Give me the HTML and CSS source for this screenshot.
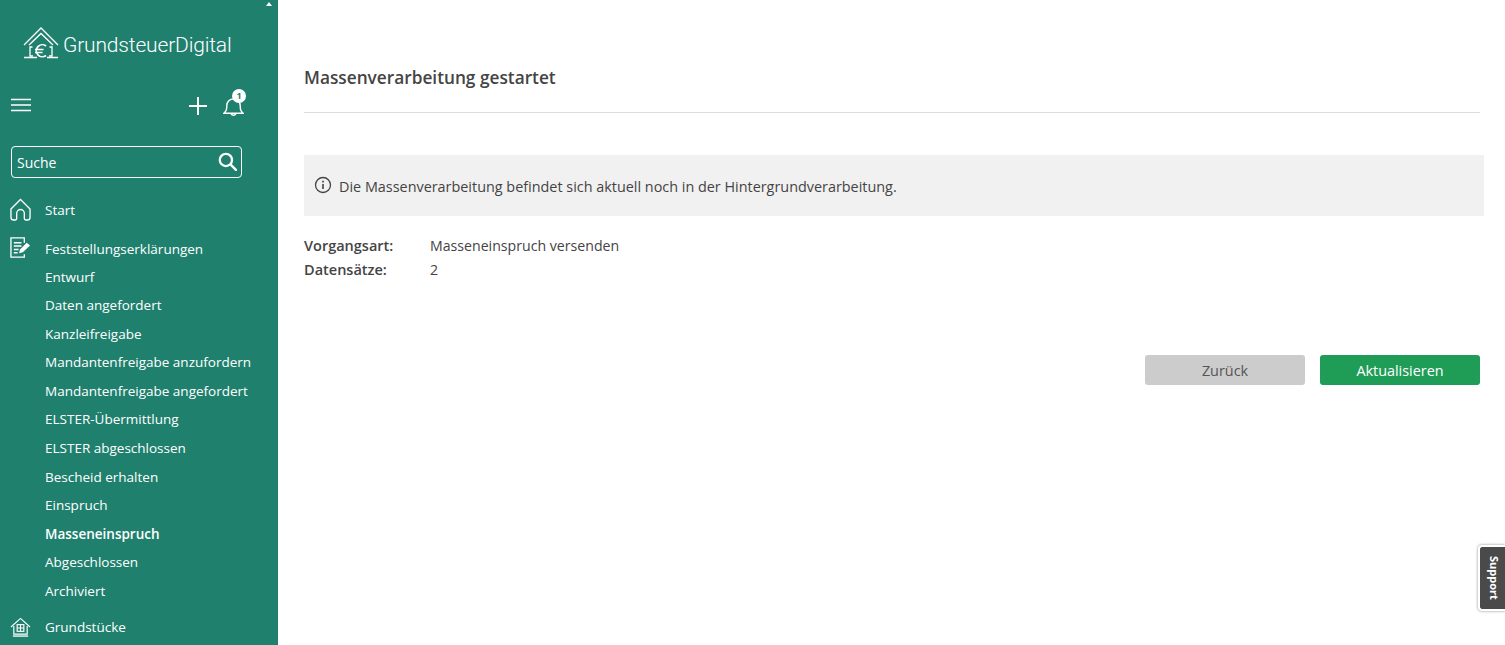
FILE: index.html
```
<!DOCTYPE html>
<html lang="de">
<head>
<meta charset="utf-8">
<title>Massenverarbeitung gestartet</title>
<link rel="stylesheet" href="styles.css">
</head>
<body>
<div class="app">
  <aside class="sidebar">
    <span class="scroll-up"></span>
    <div class="logo">
      <svg class="logo-icon" viewBox="0 0 36 34" fill="none" stroke="#fff" stroke-width="1.3">
        <path d="M1 19 18 2 35 19M6 19 18 7.500 30 19"/>
        <path d="M9.500 21H7v9h3M26.500 21H29v9h-3"/>
        <path d="M23 20a6 6 0 1 0 0 9.500M12 23.500h8.500M12 26.500h7.500" stroke-width="1.700"/>
        <path d="M1 31.500h13M24 31.500h11" stroke-width="1.500"/>
      </svg>
      <span class="logo-text">GrundsteuerDigital</span>
    </div>
    <div class="toolbar">
      <svg class="burger" viewBox="0 0 20 14" stroke="#fff" stroke-width="1.6"><path d="M0 1.5h20M0 7h20M0 12.5h20"/></svg>
      <div class="tools">
        <svg class="plus" viewBox="0 0 18 18" stroke="#fff" stroke-width="2"><path d="M9 0v18M0 9h18"/></svg>
        <div class="bell">
          <svg viewBox="0 0 22 24" fill="none" stroke="#fff" stroke-width="1.5"><path d="M1 19c2-2 3-3 3-8a7 7 0 0 1 14 0c0 5 1 6 3 8zM8.500 19.500a2.700 2.700 0 0 0 5 0"/></svg>
          <span class="badge">1</span>
        </div>
      </div>
    </div>
    <div class="search">
      <span>Suche</span>
      <svg viewBox="0 0 18 18" fill="none" stroke="#fff" stroke-width="2.200"><circle cx="7.500" cy="7.500" r="5.800"/><path d="M12 12l5 5" stroke-linecap="round"/></svg>
    </div>
    <nav class="nav">
      <a class="nav-main nav-start">
        <svg viewBox="0 0 22 24" fill="none" stroke="#fff" stroke-width="1.400"><path d="M1 11.500 11 1.500l10 10V20a3 3 0 0 1-3 3h-1.500a1.500 1.500 0 0 1-1.500-1.500V16a4 4 0 0 0-8 0v5.500A1.500 1.500 0 0 1 5.500 23H4a3 3 0 0 1-3-3z"/></svg>
        <span>Start</span>
      </a>
      <a class="nav-main nav-decl">
        <svg viewBox="0 0 22 22" fill="none" stroke="#fff" stroke-width="1.400"><path d="M15 6V1H1v20h14v-3"/><path d="M4 6h8M4 9.500h8M4 13h5M4 16.500h4" stroke-width="1.600"/><path d="M9.500 17l1-4 7-7 3.500 3-7.500 7z" fill="#fff" stroke="none"/></svg>
        <span>Feststellungserklärungen</span>
      </a>
      <div class="sub">
        <a>Entwurf</a>
        <a>Daten angefordert</a>
        <a>Kanzleifreigabe</a>
        <a>Mandantenfreigabe anzufordern</a>
        <a>Mandantenfreigabe angefordert</a>
        <a>ELSTER-Übermittlung</a>
        <a>ELSTER abgeschlossen</a>
        <a>Bescheid erhalten</a>
        <a>Einspruch</a>
        <a class="active">Masseneinspruch</a>
        <a>Abgeschlossen</a>
        <a>Archiviert</a>
      </div>
      <a class="nav-main nav-plots">
        <svg viewBox="0 0 22 20" fill="none" stroke="#fff" stroke-width="1.200"><path d="M1 10 11 1l10 9M4 9v8.500h14V9"/><path d="M3 19.500h16" stroke-width="1.400"/><rect x="7.500" y="7.500" width="7" height="7"/><path d="M11 7.500v7M7.500 11h7"/></svg>
        <span>Grundstücke</span>
      </a>
    </nav>
  </aside>
  <main class="content">
    <h1 class="title">Massenverarbeitung gestartet</h1>
    <div class="notice">
      <svg viewBox="0 0 18 18" fill="none" stroke="#444" stroke-width="1.300"><circle cx="9" cy="9" r="7.500"/><path d="M9 8v5" stroke-width="1.600"/><path d="M9 4.800v1.600" stroke-width="1.700"/></svg>
      <span>Die Massenverarbeitung befindet sich aktuell noch in der Hintergrundverarbeitung.</span>
    </div>
    <dl class="facts">
      <dt>Vorgangsart:</dt><dd>Masseneinspruch versenden</dd>
      <dt>Datensätze:</dt><dd>2</dd>
    </dl>
    <div class="actions">
      <button class="btn btn-back">Zurück</button>
      <button class="btn btn-primary">Aktualisieren</button>
    </div>
  </main>
</div>
<div class="support"><span>Support</span></div>
</body>
</html>
```
FILE: styles.css
```
* { box-sizing: border-box; }
html, body { margin: 0; height: 100%; overflow: hidden; }
body { font-family: "Open Sans", "Noto Sans", sans-serif; color: #444; background: #fff; }
.app { display: flex; height: 645px; overflow: hidden; }

.sidebar { position: relative; flex: 0 0 278px; background: #1f806e; color: #fff; overflow: hidden; }
.scroll-up { position: absolute; top: 2px; left: 266px; width: 0; height: 0; border-left: 3.500px solid transparent; border-right: 3.500px solid transparent; border-bottom: 4px solid #fff; }

.logo { display: flex; align-items: center; gap: 4px; padding: 26px 0 0 23px; height: 60px; }
.logo-icon { width: 36px; height: 34px; flex: none; }
.logo-text { font-family: "Roboto", sans-serif; font-size: 21px; font-weight: 300; line-height: 34px; letter-spacing: -.17px; margin-top: 4px; }

.toolbar { display: flex; justify-content: space-between; align-items: center; height: 36px; margin-top: 27px; padding: 0 34px 0 11px; }
.burger { width: 20px; height: 14px; }
.tools { display: flex; align-items: center; gap: 16px; }
.plus { width: 18px; height: 18px; margin-top: 2px; }
.bell { position: relative; width: 21px; height: 23px; margin-top: 3px; }
.bell svg { display: block; width: 21px; height: 23px; }
.badge { position: absolute; top: -6px; left: 9px; width: 14px; height: 14px; border-radius: 50%; background: #fff; color: #1f806e; font-size: 9px; font-weight: 700; line-height: 14px; text-align: center; }

.search { display: flex; justify-content: space-between; align-items: center; width: 231px; height: 32px; margin: 23px 0 0 11px; padding: 1px 4px 0 5px; border: 1px solid #fff; border-radius: 4px; font-size: 14px; }
.search svg { width: 19px; height: 19px; margin-top: -2px; }

.nav { margin-top: 15px; font-size: 13.500px; }
.nav-main { display: flex; align-items: center; height: 34px; padding-left: 10px; }
.nav-main svg { flex: none; width: 21px; margin-right: 14px; }
.nav-start svg { height: 23px; margin-top: -2px; }
.nav-decl { margin-top: 5px; }
.nav-decl svg { height: 21px; margin-top: -4px; }
.nav-plots { margin-top: 4px; }
.nav-plots svg { height: 20px; }
.sub { display: flex; flex-direction: column; margin-top: -3.500px; }
.sub a { display: block; height: 28.600px; line-height: 28.600px; padding-left: 45px; white-space: nowrap; }
.sub .active { font-weight: 600; }

.content { flex: 1; padding: 64px 21px 0 26px; min-width: 0; }
.title { margin: 0 4px 0 0; height: 49px; padding-bottom: 0; border-bottom: 1px solid #ddd; font-size: 17.250px; font-weight: 600; line-height: 27px; color: #444; }
.notice { display: flex; align-items: center; gap: 7px; height: 61px; margin-top: 42px; padding: 2px 0 0 10px; background: #f1f1f1; font-size: 14.400px; }
.notice svg { width: 18px; height: 18px; flex: none; margin-top: -3px; }
.facts { display: grid; grid-template-columns: 126px 1fr; grid-auto-rows: 24px; margin: 18px 0 0; font-size: 14.150px; line-height: 24px; }
.facts dt { font-weight: 600; font-size: 14.500px; }
.facts dd { margin: 0; }
.actions { display: flex; justify-content: flex-end; gap: 15px; margin: 73px 4px 0 0; }
.btn { width: 160px; height: 30px; border: 0; border-radius: 3px; padding: 1px 0 0; font-family: inherit; font-size: 14.400px; }
.btn-back { background: #ccc; color: #555; }
.btn-primary { background: #1f9d57; color: #fff; }

.support { position: absolute; top: 545px; right: 0; display: flex; align-items: center; justify-content: center; width: 27px; height: 66px; padding-left: 4px; background: #4a4a4a; border: 2px solid #fff; border-right: 0; border-radius: 4px 0 0 4px; box-shadow: 0 0 3px rgba(0,0,0,.45); color: #fff; }
.support span { writing-mode: vertical-rl; font-size: 11px; font-weight: 700; }
```
